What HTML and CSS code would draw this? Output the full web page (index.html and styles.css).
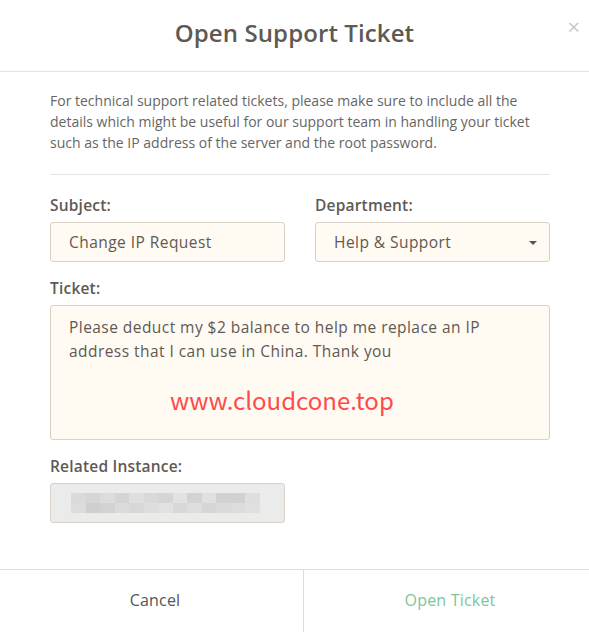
FILE: index.html
```html
<!DOCTYPE html>
<html lang="en">

<head>
    <meta charset="UTF-8" />
    <title>Open Support Ticket</title>
    <link rel="stylesheet" href="styles.css">
</head>

<body>
    <div class="modal">
        <div class="modal-header">
            <h1>Open Support Ticket</h1>
            <span class="close">&times;</span>
        </div>

        <div class="modal-body">
            <p class="note">For technical support related tickets, please make sure to include all the<br />
                details which might be useful for our support team in handling your ticket<br />
                such as the IP address of the server and the root password.</p>
            <hr />

            <div class="row">
                <div class="field">
                    <label>Subject:</label>
                    <div class="input">Change IP Request</div>
                </div>
                <div class="field">
                    <label>Department:</label>
                    <div class="input select">Help &amp; Support<span class="caret"></span></div>
                </div>
            </div>

            <div class="field">
                <label>Ticket:</label>
                <div class="input textarea">
                    Please deduct my $2 balance to help me replace an IP<br />
                    address that I can use in China. Thank you
                    <span class="watermark">www.cloudcone.top</span>
                </div>
            </div>

            <div class="field half">
                <label>Related Instance:</label>
                <div class="input disabled">
                    <!-- blurred instance name -->
                    <div class="pixels">
                        <i style="background:#dadada"></i><i style="background:#d6d6d6"></i><i style="background:#dcdcdc"></i><i style="background:#d4d4d4"></i><i style="background:#dfdfdf"></i><i style="background:#d9d9d9"></i><i style="background:#d5d5d5"></i><i style="background:#e2e2e2"></i><i style="background:#d3d3d3"></i><i style="background:#e0e0e0"></i><i style="background:#d1d1d1"></i><i style="background:#d1d1d1"></i><i style="background:#dedede"></i>
                        <i style="background:#dcdcdc"></i><i style="background:#cfcfcf"></i><i style="background:#d2d2d2"></i><i style="background:#dbdbdb"></i><i style="background:#d7d7d7"></i><i style="background:#dddddd"></i><i style="background:#e1e1e1"></i><i style="background:#d8d8d8"></i><i style="background:#dedede"></i><i style="background:#d6d6d6"></i><i style="background:#dadada"></i><i style="background:#dcdcdc"></i><i style="background:#e0e0e0"></i>
                    </div>
                </div>
            </div>
        </div>

        <div class="modal-footer">
            <button class="btn cancel">Cancel</button>
            <button class="btn primary">Open Ticket</button>
        </div>
    </div>
</body>

</html>
```

FILE: styles.css
```css
body {
    margin: 0;
    background: #fff;
    font-family: "Open Sans", "Noto Sans", sans-serif;
    color: #5e5954;
}

.modal {
    width: 589px;
    height: 632px;
    display: flex;
    flex-direction: column;
    background: #fff;
}

.modal-header {
    position: relative;
    box-sizing: border-box;
    height: 72px;
    padding-bottom: 6px;
    border-bottom: 1px solid #e3e3e3;
    display: flex;
    align-items: center;
    justify-content: center;
}

.modal-header h1 {
    margin: 0;
    font-size: 24px;
    font-weight: 600;
    color: #5e5954;
    letter-spacing: 0.1px;
}

.close {
    position: absolute;
    right: 9px;
    top: 11px;
    font-size: 22px;
    color: #c8c8c8;
}

.modal-body {
    flex: 1;
    padding: 18px 39px 0 50px;
}

.note {
    margin: 0;
    font-size: 14px;
    line-height: 21px;
    color: #666;
}

hr {
    border: none;
    border-top: 1px solid #e6e6e6;
    margin: 21px 0 20px;
}

.row {
    display: flex;
    gap: 30px;
}

.row .field {
    flex: 1;
}

.field label {
    display: block;
    font-size: 15.5px;
    font-weight: 600;
    letter-spacing: 0.2px;
    line-height: 20px;
    margin-bottom: 7px;
}

.input {
    box-sizing: border-box;
    height: 40px;
    padding: 0 18px;
    background: #fffaf2;
    border: 1px solid #d9d1c5;
    border-radius: 3px;
    font-size: 15.5px;
    letter-spacing: 0.45px;
    display: flex;
    align-items: center;
    margin-bottom: 16px;
}

.select {
    position: relative;
}

.caret {
    position: absolute;
    right: 12px;
    top: 18px;
    border-left: 4px solid transparent;
    border-right: 4px solid transparent;
    border-top: 4px solid #555;
}

.textarea {
    position: relative;
    display: block;
    height: 135px;
    padding-top: 9px;
    line-height: 24px;
}

.watermark {
    position: absolute;
    left: 119px;
    top: 77px;
    font-family: "Noto Sans CJK SC", "Noto Sans", sans-serif;
    font-size: 24px;
    letter-spacing: 0;
    line-height: 34px;
    color: #ff4a4a;
}

.half {
    width: 235px;
}

.disabled {
    background: #ebebeb;
}

.pixels {
    display: grid;
    grid-template-columns: repeat(13, 14.5px);
    grid-auto-rows: 10px;
    margin-left: 2px;
}

.modal-footer {
    height: 62px;
    border-top: 1px solid #dcdcdc;
    display: flex;
}

.btn {
    flex: 1;
    border: none;
    background: #fff;
    font-family: inherit;
    font-size: 16px;
    letter-spacing: 0.2px;
    color: #555;
    padding: 0 0 3px 7px;
}

.cancel {
    flex: 0 0 303px;
}

.btn + .btn {
    border-left: 1px solid #dcdcdc;
}

.primary {
    color: #7cc69a;
}
```
